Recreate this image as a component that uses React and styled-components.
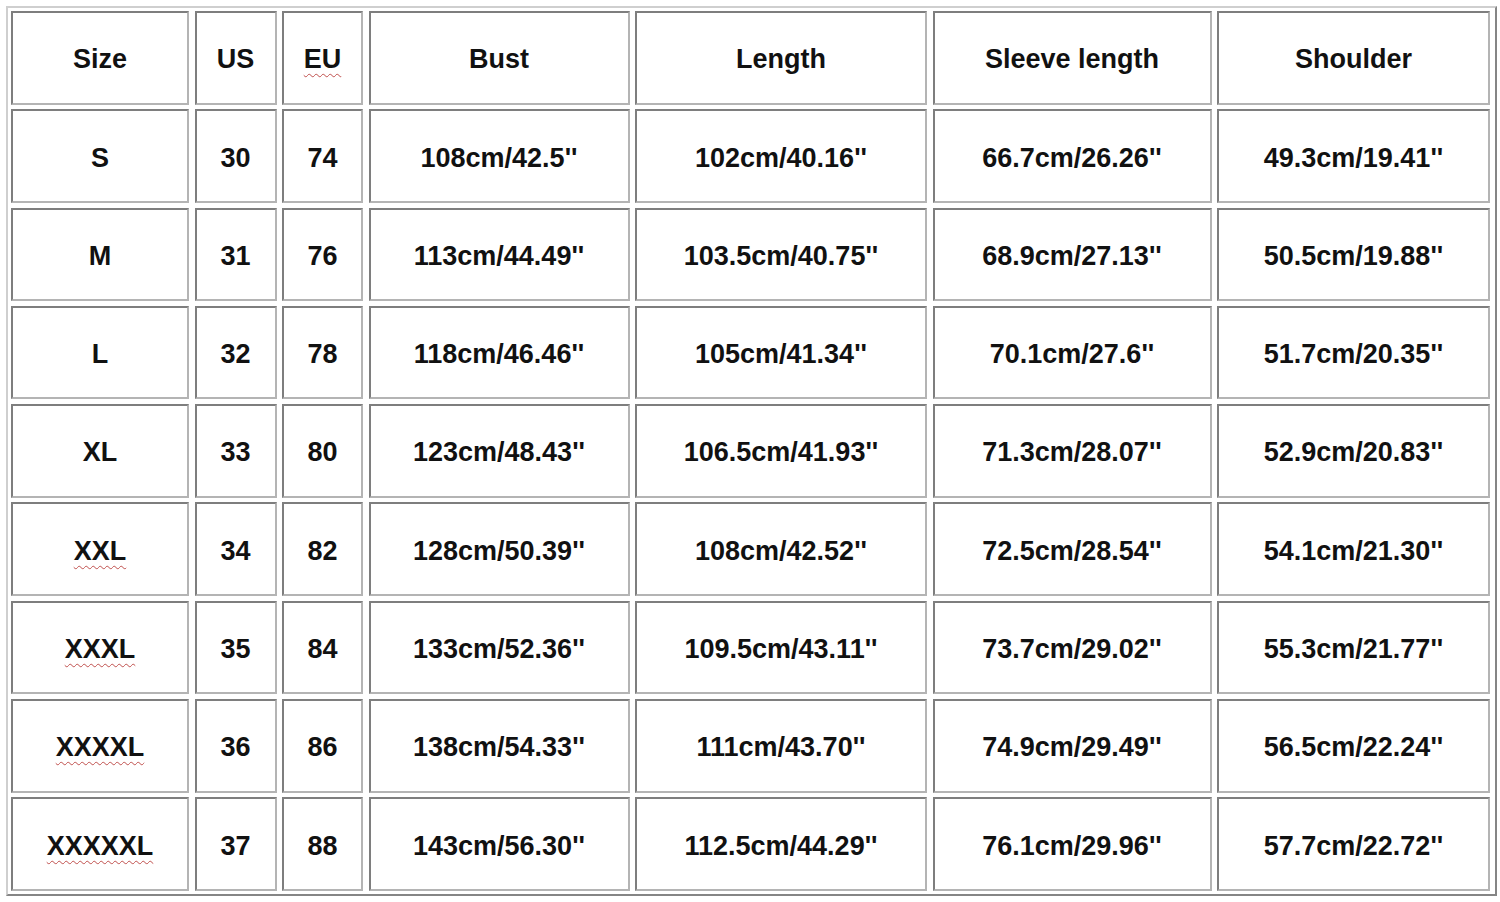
import styled, { createGlobalStyle } from "styled-components";

const GlobalStyle = createGlobalStyle`
  html, body {
    margin: 0;
    padding: 0;
    background: #ffffff;
  }
  body {
    font-family: "Liberation Sans", Arial, sans-serif;
  }
`;

const Table = styled.div`
  margin: 6px 0 0 6px;
  width: 1491px;
  box-sizing: border-box;
  padding: 3px;
  border: 2px solid;
  border-color: #cfcfcf #858585 #858585 #cfcfcf;
  display: grid;
  grid-template-columns: 178px 82px 81px 261px 292px 279px 273px;
  grid-auto-rows: 93.5px;
  column-gap: 5.5px;
  row-gap: 4.8px;
`;

const Cell = styled.div`
  box-sizing: border-box;
  border: 2px solid;
  border-color: #7e7e7e #b4b4b4 #b4b4b4 #7e7e7e;
  display: flex;
  align-items: center;
  justify-content: center;
  font-weight: 700;
  font-size: 27px;
  color: #111111;
  white-space: nowrap;
  padding-top: 4px;
`;

const Word = styled.span`
  text-decoration: ${(p) => (p.$spell ? "underline wavy #c0504d" : "none")};
  text-decoration-thickness: 1px;
  text-underline-offset: 5px;
`;

const header = ["Size", "US", "EU", "Bust", "Length", "Sleeve length", "Shoulder"];

const rows = [
  ["S", "30", "74", "108cm/42.5''", "102cm/40.16''", "66.7cm/26.26''", "49.3cm/19.41''"],
  ["M", "31", "76", "113cm/44.49''", "103.5cm/40.75''", "68.9cm/27.13''", "50.5cm/19.88''"],
  ["L", "32", "78", "118cm/46.46''", "105cm/41.34''", "70.1cm/27.6''", "51.7cm/20.35''"],
  ["XL", "33", "80", "123cm/48.43''", "106.5cm/41.93''", "71.3cm/28.07''", "52.9cm/20.83''"],
  ["XXL", "34", "82", "128cm/50.39''", "108cm/42.52''", "72.5cm/28.54''", "54.1cm/21.30''"],
  ["XXXL", "35", "84", "133cm/52.36''", "109.5cm/43.11''", "73.7cm/29.02''", "55.3cm/21.77''"],
  ["XXXXL", "36", "86", "138cm/54.33''", "111cm/43.70''", "74.9cm/29.49''", "56.5cm/22.24''"],
  ["XXXXXL", "37", "88", "143cm/56.30''", "112.5cm/44.29''", "76.1cm/29.96''", "57.7cm/22.72''"],
];

// words the spellchecker flagged in the original document
const flagged = ["EU", "XXL", "XXXL", "XXXXL", "XXXXXL"];

const App = () => (
  <>
    <GlobalStyle />
    <Table>
      {[header, ...rows].map((row, r) =>
        row.map((text, c) => (
          <Cell key={`${r}-${c}`}>
            <Word $spell={flagged.includes(text)}>{text}</Word>
          </Cell>
        ))
      )}
    </Table>
  </>
);

export default App;
